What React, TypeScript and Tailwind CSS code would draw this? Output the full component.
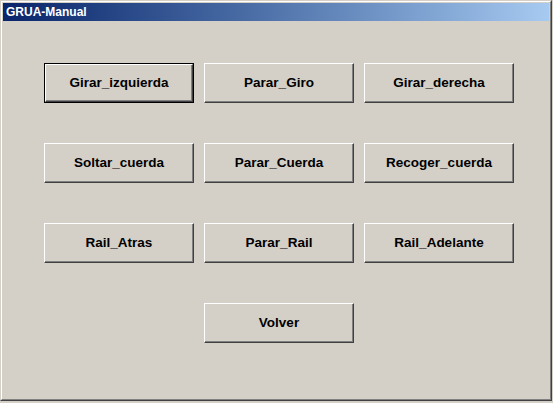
const rows: string[][] = [
  ["Girar_izquierda", "Parar_Giro", "Girar_derecha"],
  ["Soltar_cuerda", "Parar_Cuerda", "Recoger_cuerda"],
  ["Rail_Atras", "Parar_Rail", "Rail_Adelante"],
];

function Bevel({ children }: { children: React.ReactNode }) {
  return (
    <span className="flex h-full w-full items-center justify-center border border-t-white border-l-white border-r-[#404040] border-b-[#404040] shadow-[inset_-1px_-1px_#808080]">
      {children}
    </span>
  );
}

function WinButton({ label, isDefault }: { label: string; isDefault?: boolean }) {
  return (
    <button
      className={`h-[40px] w-[150px] bg-[#d4d0c8] p-0 text-[13.5px] font-bold text-black ${
        isDefault ? "border border-black" : ""
      }`}
    >
      <Bevel>{label}</Bevel>
    </button>
  );
}

export default function App() {
  return (
    <div
      className="h-[403px] w-[553px] bg-[#d4d0c8]"
      style={{ fontFamily: '"Liberation Sans", Arial, sans-serif' }}
    >
      <div className="h-[401px] w-[552px] border border-t-[#d4d0c8] border-l-[#d4d0c8] border-r-[#404040] border-b-[#404040]">
        <div className="flex h-full flex-col border border-t-white border-l-white border-r-[#808080] border-b-[#808080] p-px">
          <div className="flex h-[18px] shrink-0 items-center bg-gradient-to-r from-[#0a246a] to-[#a6caf0] pl-[3px] text-[12px] font-bold text-white">
            GRUA-Manual
          </div>
          <div className="grid flex-1 grid-cols-[150px_150px_150px] content-start gap-x-[10px] gap-y-[40px] pl-[41px] pt-[42px]">
            {rows.map((row, i) =>
              row.map((label, j) => (
                <WinButton key={label} label={label} isDefault={i === 0 && j === 0} />
              ))
            )}
            <div className="col-start-2">
              <WinButton label="Volver" />
            </div>
          </div>
        </div>
      </div>
    </div>
  );
}
